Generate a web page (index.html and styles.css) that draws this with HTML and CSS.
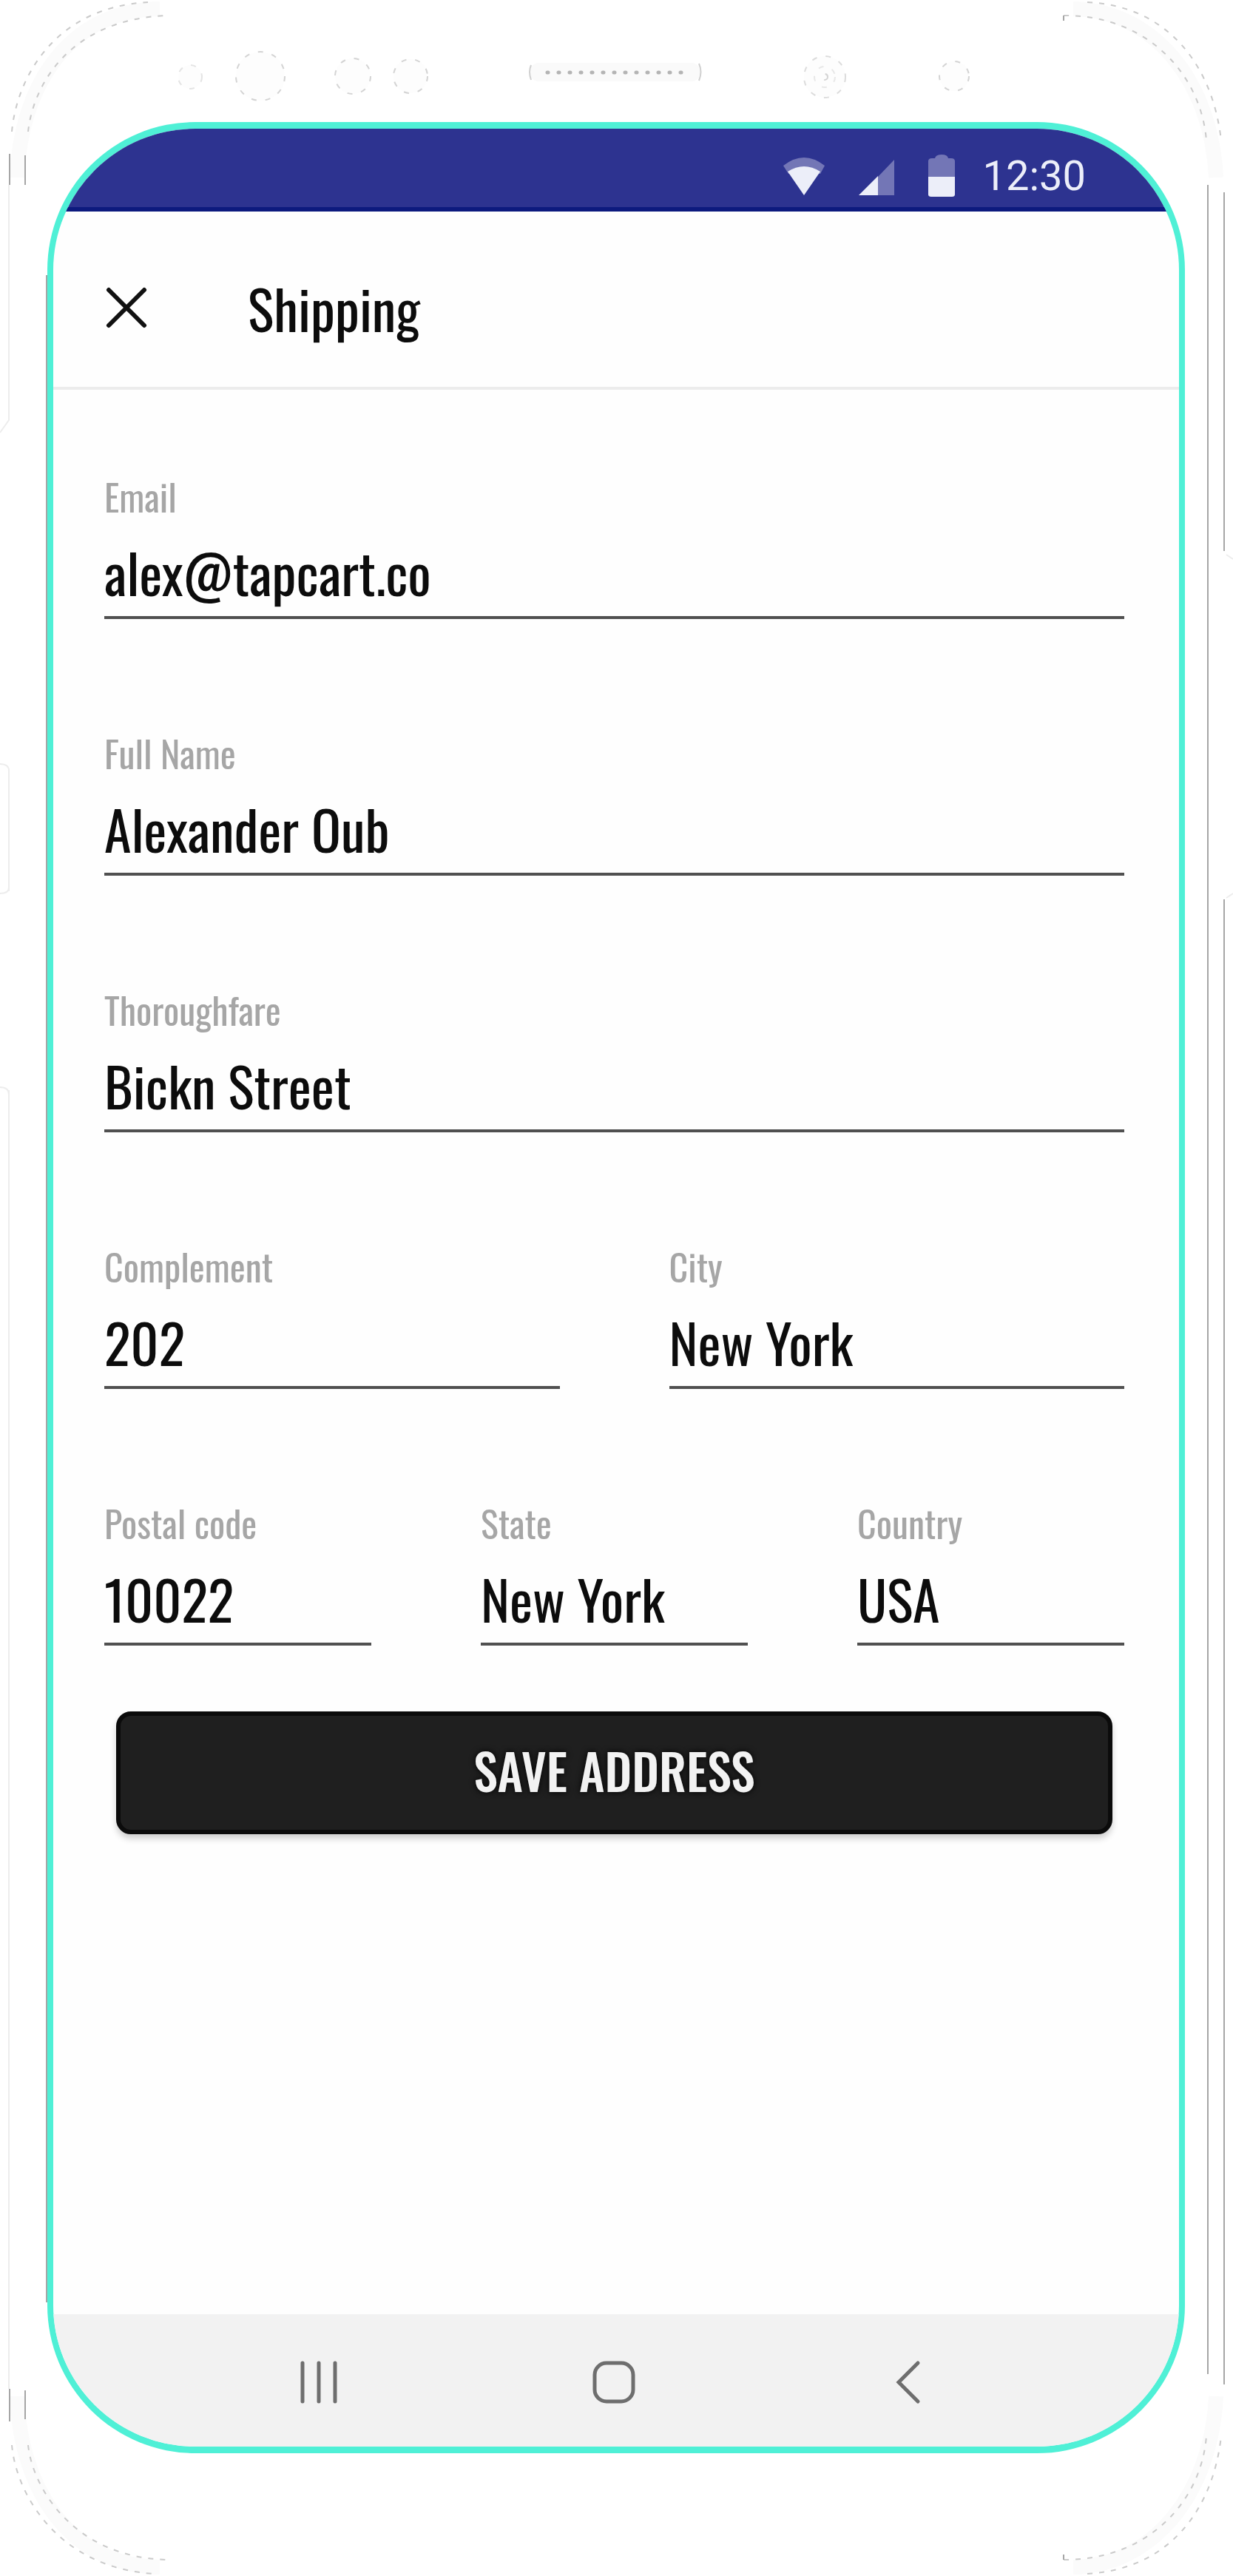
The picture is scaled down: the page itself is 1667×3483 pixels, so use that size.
FILE: index.html
```html
<!DOCTYPE html>
<html lang="en">
<head>
<meta charset="utf-8">
<title>Shipping</title>
<link rel="stylesheet" href="styles.css">
</head>
<body>
<div class="phone">
  <svg class="phone-body" viewBox="0 0 1667 3483" preserveAspectRatio="none" aria-hidden="true">
    <g fill="none">
      <g stroke="#fbfbfb" stroke-width="20">
        <path d="M23 240C27 120 90 14 216 12M1451 12C1560 14 1638 110 1644 240M23 3240C27 3360 90 3469 216 3471M1451 3471C1560 3469 1638 3370 1644 3240"/>
      </g>
      <g stroke="#cacaca" stroke-width="2" stroke-dasharray="7 9">
        <path d="M16 178C22 110 70 10 200 3M38 178C44 120 90 26 226 21"/>
        <path d="M1470 3C1580 8 1640 90 1651 190M1438 21C1550 20 1624 100 1631 190"/>
        <path d="M16 3306C22 3374 80 3472 208 3480M38 3306C44 3364 100 3458 226 3461"/>
        <path d="M1470 3480C1580 3474 1640 3394 1651 3294M1438 3461C1550 3462 1624 3384 1631 3294"/>
      </g>
      <g stroke="#a6a6a6" stroke-width="2">
        <path d="M13 208V250M34 210V250M13 3230V3274M34 3232V3271M1438 21V28M1438 3461V3454"/>
        <path d="M1633 250V3210M1655 260V745M1655 1216V3224"/>
        <path d="M63 372V3113"/>
      </g>
      <path stroke="#ededed" stroke-width="2" d="M12 250V568L0 585M12 1040V1205M12 1474V3230M0 1033Q12 1033 12 1042M0 1208Q12 1208 12 1200M0 1470Q12 1470 12 1480M1658 750L1667 756M1658 1214L1667 1208"/>
    </g>
    <g fill="#fdfdfd" stroke="#d4d4d4" stroke-width="2" stroke-dasharray="7 12">
      <circle cx="257" cy="104" r="16" stroke="#e4e4e4"/>
      <circle cx="352" cy="103" r="33"/>
      <circle cx="477" cy="103" r="24"/>
      <circle cx="555" cy="103" r="23"/>
      <circle cx="1115" cy="104" r="28" stroke="#dcdcdc"/>
      <circle cx="1115" cy="104" r="14" stroke="#e8e8e8"/>
      <circle cx="1115" cy="104" r="4"/>
      <circle cx="1290" cy="103" r="20"/>
    </g>
    <rect x="716" y="85" width="231" height="25" rx="12" fill="#fafafa"/>
    <path d="M718 88Q714 97 718 108M945 86Q950 97 945 109" fill="none" stroke="#d0d0d0" stroke-width="2"/>
    <path d="M740 98H930" fill="none" stroke="#b4b4b4" stroke-width="5" stroke-linecap="round" stroke-dasharray="1 14"/>
  </svg>

  <main class="screen">
    <div class="status-bar">
      <svg class="status-icon" width="56" height="54" viewBox="0 0 56 54" aria-label="Wi-Fi">
        <path fill="#7376b6" d="M0 13Q28 -9 56 13L50 24H7Z"/>
        <path fill="#eceef9" d="M6 21Q28 7 50 21L28 53Z"/>
      </svg>
      <svg class="status-icon" width="48" height="54" viewBox="0 0 48 54" aria-label="Signal">
        <path fill="#7376b6" d="M48 5V53H26V28Z"/>
        <path fill="#eceef9" d="M26 27V53H0Z"/>
      </svg>
      <svg class="status-icon battery" width="36" height="58" viewBox="0 0 36 58" aria-label="Battery">
        <path fill="#7376b6" d="M0 30V9Q0 5 5 5H9Q10 0 18 0T27 5H31Q36 5 36 9V30Z"/>
        <path fill="#eceef9" d="M0 30H36V54Q36 57 32 57H4Q0 57 0 54Z"/>
      </svg>
      <span class="clock">12:30</span>
    </div>

    <header class="app-bar">
      <button class="close" type="button" aria-label="Close">
        <svg width="56" height="56" viewBox="0 0 56 56"><path d="M4 4L52 52M52 4L4 52" fill="none" stroke="#111" stroke-width="6" stroke-linecap="round"/></svg>
      </button>
      <h1 class="title">Shipping</h1>
    </header>

    <form class="form">
      <div class="row">
        <div class="field"><label for="email">Email</label><input id="email" type="text" value="alex@tapcart.co"></div>
      </div>
      <div class="row">
        <div class="field"><label for="name">Full Name</label><input id="name" type="text" value="Alexander Oub"></div>
      </div>
      <div class="row">
        <div class="field"><label for="street">Thoroughfare</label><input id="street" type="text" value="Bickn Street"></div>
      </div>
      <div class="row">
        <div class="field"><label for="complement">Complement</label><input id="complement" type="text" value="202"></div>
        <div class="field"><label for="city">City</label><input id="city" type="text" value="New York"></div>
      </div>
      <div class="row">
        <div class="field"><label for="postal">Postal code</label><input id="postal" type="text" value="10022"></div>
        <div class="field"><label for="state">State</label><input id="state" type="text" value="New York"></div>
        <div class="field"><label for="country">Country</label><input id="country" type="text" value="USA"></div>
      </div>
      <button class="save" type="button">SAVE ADDRESS</button>
    </form>

    <nav class="nav-bar">
      <button type="button" aria-label="Recent apps">
        <svg width="60" height="60" viewBox="0 0 60 60"><path d="M8 4V56M30 4V56M52 4V56"/></svg>
      </button>
      <button type="button" aria-label="Home">
        <svg width="60" height="60" viewBox="0 0 60 60"><rect x="4" y="4" width="52" height="52" rx="16"/></svg>
      </button>
      <button type="button" aria-label="Back">
        <svg width="60" height="60" viewBox="0 0 60 60"><path d="M43 4L17 30L43 56"/></svg>
      </button>
    </nav>
  </main>
</div>
</body>
</html>
```
FILE: styles.css
```css
* {
  box-sizing: border-box;
}

body {
  margin: 0;
  background: #fff;
  color: #0c0c0c;
  font-family: Oswald, "Roboto Condensed", "Open Sans", sans-serif;
}

button {
  border: 0;
  padding: 0;
  background: none;
  font: inherit;
}

svg {
  display: block;
}

.phone {
  position: relative;
  display: flex;
  min-height: 100vh;
  padding: 165px 65px 166px 64px;
}

.phone-body {
  position: absolute;
  inset: 0;
  width: 100%;
  height: 100%;
}

.screen {
  position: relative;
  display: flex;
  flex: 1;
  flex-direction: column;
  overflow: hidden;
  border: solid #4ff0d6;
  border-width: 9px 8px;
  border-radius: 200px;
  background: #fefefe;
}

.status-bar {
  display: flex;
  align-items: center;
  justify-content: flex-end;
  height: 112px;
  padding: 22px 126px 0 0;
  border-bottom: 6px solid #0d1a7e;
  background: #2d3390;
}

.status-icon {
  margin-right: 46px;
}

.battery {
  margin-right: 38px;
}

.clock {
  color: #eceef9;
  font-family: Roboto, sans-serif;
  font-size: 56px;
  line-height: 60px;
}

.app-bar {
  display: flex;
  align-items: center;
  gap: 136px;
  padding: 86px 71px 63px;
  border-bottom: 4px solid #ececec;
}

.title {
  margin: 0;
  font-size: 74px;
  font-weight: 400;
  line-height: 88px;
}

.form {
  display: flex;
  flex: 1;
  flex-direction: column;
  gap: 150px;
  padding: 113px 74px 0 69px;
}

.row {
  display: flex;
  gap: 148px;
}

.field {
  display: flex;
  flex: 1;
  flex-direction: column;
  gap: 28px;
  min-width: 0;
}

.field label {
  color: #a6a6a6;
  font-size: 50px;
  line-height: 60px;
}

.field input {
  width: 100%;
  height: 109px;
  padding: 0 0 17px;
  border: 0;
  border-bottom: 4px solid #505050;
  border-radius: 0;
  background: none;
  color: inherit;
  font: 400 74px/88px Oswald, "Roboto Condensed", sans-serif;
}

.save {
  height: 166px;
  margin: -61px 16px 0;
  padding-bottom: 8px;
  border: 6px solid #0b0b0b;
  border-radius: 20px;
  background: #1f1f1f;
  box-shadow: 0 6px 8px #00000030;
  color: #f2f2f2;
  font-size: 66px;
  font-weight: 500;
  text-shadow: 0 0 8px #000;
}

.nav-bar {
  display: flex;
  justify-content: space-between;
  height: 179px;
  padding: 62px 336px 0 329px;
  background: #f2f2f2;
}

.nav-bar svg {
  fill: none;
  stroke: #6e6e6e;
  stroke-width: 5;
  stroke-linecap: round;
}

.nav-bar button {
  width: 60px;
  height: 60px;
}
```
